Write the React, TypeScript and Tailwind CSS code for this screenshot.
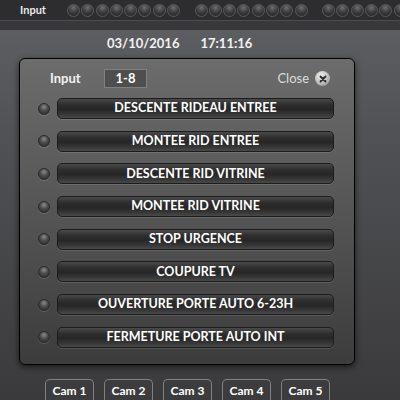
export default function App() {
  const rows = [
    "DESCENTE RIDEAU ENTREE",
    "MONTEE RID ENTREE",
    "DESCENTE RID VITRINE",
    "MONTEE RID VITRINE",
    "STOP URGENCE",
    "COUPURE TV",
    "OUVERTURE PORTE AUTO 6-23H",
    "FERMETURE PORTE AUTO INT",
  ]
  const cams = ["Cam 1", "Cam 2", "Cam 3", "Cam 4", "Cam 5"]

  const Led = ({ size }: { size: string }) => (
    <div
      className={`${size} shrink-0 rounded-full border border-[#2a2a2a] bg-[radial-gradient(circle_at_50%_30%,#8a8a8a_0%,#4a4a4a_45%,#2a2a2a_100%)] shadow-[0_1px_0_rgba(255,255,255,0.15)]`}
    />
  )

  return (
    <div
      className="w-[400px] h-[400px] overflow-hidden bg-[linear-gradient(#606165_0%,#4e4f52_40%,#3a3a3c_100%)] text-white"
      style={{ fontFamily: "Lato, 'Open Sans', sans-serif" }}
    >
      {/* top bar */}
      <div className="h-[21px] bg-[#2d2d2f] border-b border-[#4c4c4e] flex items-center">
        <div className="w-[67px] shrink-0 pl-[20px] text-[11px] font-bold text-[#e8e8e8]">Input</div>
        {[0, 1, 2].map((g) => (
          <div key={g} className="flex shrink-0 gap-[1.3px] mr-[14.5px]">
            {[...Array(8)].map((_, i) => (
              <div
                key={i}
                className="w-[13px] h-[13px] shrink-0 rounded-full border border-[#5a5a5a] bg-[radial-gradient(circle_at_50%_25%,#6e6e6e_0%,#3a3a3a_50%,#222_100%)]"
              />
            ))}
          </div>
        ))}
      </div>
      <div className="h-[9px] bg-[#38383a]" />

      {/* date time */}
      <div className="h-[28px] flex items-center pl-[107px] gap-[21px] text-[13px] font-bold text-[#f2f2f2]">
        <span>03/10/2016</span>
        <span>17:11:16</span>
      </div>

      {/* panel */}
      <div className="ml-[19px] w-[336px] h-[307px] rounded-[6px] border border-black bg-[linear-gradient(#6c6c6c_0%,#555_50%,#3c3c3c_100%)] shadow-[0_2px_6px_rgba(0,0,0,0.6)] flex flex-col">
        <div className="h-[39px] shrink-0 flex items-center pl-[30px] pr-[24px]">
          <span className="w-[54px] text-[13px] font-bold text-[#f2f2f2]">Input</span>
          <div className="w-[43px] h-[19px] border border-[#808080] bg-[#4e4e4e] flex items-center justify-center text-[13px] font-bold">
            1-8
          </div>
          <span className="ml-auto text-[13px] text-[#dcdcdc]">Close</span>
          <div className="ml-[6px] w-[15px] h-[15px] rounded-full bg-[radial-gradient(circle_at_40%_30%,#f0f0f0_0%,#b8b8b8_60%,#777_100%)] flex items-center justify-center">
            <svg width="8" height="8" viewBox="0 0 8 8">
              <path d="M1.5 1.5 L6.5 6.5 M6.5 1.5 L1.5 6.5" stroke="#2a2a2a" strokeWidth="1.8" strokeLinecap="round" />
            </svg>
          </div>
        </div>
        <div className="flex flex-col gap-[11.7px]">
          {rows.map((r) => (
            <div key={r} className="flex items-center">
              <div className="w-[37px] flex justify-end pr-[7px]">
                <Led size="w-[12px] h-[12px]" />
              </div>
              <div className="w-[277px] h-[21px] rounded-[5px] border border-[#1c1c1c] bg-[linear-gradient(#4a4a4a_0%,#2e2e2e_30%,#262626_55%,#3a3a3a_85%,#4a4a4a_100%)] shadow-[0_1px_0_rgba(255,255,255,0.12)] flex items-center justify-center text-[12.5px] font-bold text-white">
                {r}
              </div>
            </div>
          ))}
        </div>
      </div>

      {/* cams */}
      <div className="mt-[14px] pl-[45px] flex gap-[10px]">
        {cams.map((c) => (
          <div
            key={c}
            className="w-[49px] h-[24px] rounded-t-[5px] border border-[#808080] border-b-0 bg-[#3c3c3e] flex items-start justify-center pt-[2px] text-[12px] font-bold text-white"
          >
            {c}
          </div>
        ))}
      </div>
    </div>
  )
}
